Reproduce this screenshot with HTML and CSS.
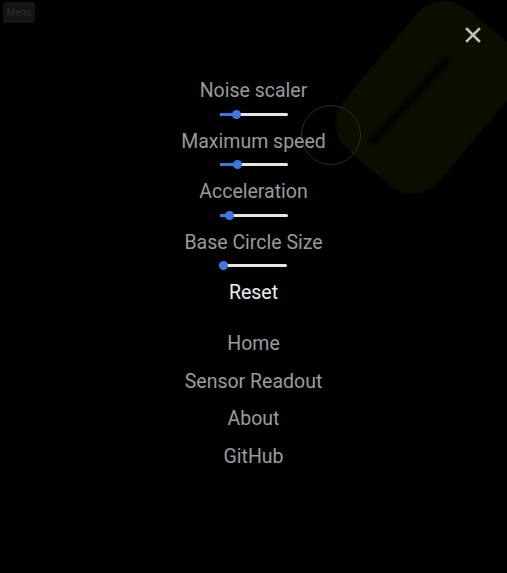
FILE: index.html
```html
<!DOCTYPE html>
<html>
<head>
<meta charset="utf-8">
<link rel="stylesheet" href="styles.css">
</head>
<body>
<svg class="bg" width="507" height="573" viewBox="0 0 507 573">
  <defs>
    <filter id="blur"><feGaussianBlur stdDeviation="2.5"/></filter>
  </defs>
  <rect x="0" y="0" width="125" height="185" rx="34" fill="#0b0706" transform="translate(440,-14) rotate(40)" filter="url(#blur)"/>
  <line x1="447" y1="60" x2="372" y2="142" stroke="#020101" stroke-width="7" stroke-linecap="round" filter="url(#blur)"/>
</svg>
<div class="circle"></div>
<button class="menu-btn">Menu</button>
<button class="close-btn" aria-label="Close">
  <svg width="16" height="16" viewBox="0 0 16 16"><path d="M2 2 L14 14 M14 2 L2 14" stroke="#bdbdbd" stroke-width="2.6" stroke-linecap="square"/></svg>
</button>
<main class="panel">
  <div class="group">
    <div class="label">Noise scaler</div>
    <div class="slider"><div class="track"><div class="fill" style="width:17px"></div><div class="thumb" style="left:17px"></div></div></div>
  </div>
  <div class="group">
    <div class="label">Maximum speed</div>
    <div class="slider"><div class="track"><div class="fill" style="width:18px"></div><div class="thumb" style="left:18px"></div></div></div>
  </div>
  <div class="group">
    <div class="label">Acceleration</div>
    <div class="slider"><div class="track"><div class="fill" style="width:10px"></div><div class="thumb" style="left:10px"></div></div></div>
  </div>
  <div class="group">
    <div class="label">Base Circle Size</div>
    <div class="slider"><div class="track"><div class="fill" style="width:4px"></div><div class="thumb" style="left:4px"></div></div></div>
  </div>
  <div class="reset">Reset</div>
  <nav class="nav">
    <a>Home</a>
    <a>Sensor Readout</a>
    <a>About</a>
    <a>GitHub</a>
  </nav>
</main>
</body>
</html>
```
FILE: styles.css
```css
html, body {
  margin: 0;
  padding: 0;
  background: #000;
  width: 507px;
  height: 573px;
  overflow: hidden;
  font-family: Roboto, "Liberation Sans", sans-serif;
}
body { position: relative; }
.bg {
  position: absolute;
  left: 0;
  top: 0;
}
.circle {
  position: absolute;
  left: 301px;
  top: 105px;
  width: 58px;
  height: 58px;
  border: 1px solid #2c2c2c;
  border-radius: 50%;
}
.menu-btn {
  position: absolute;
  left: 3px;
  top: 2px;
  width: 32px;
  height: 21px;
  padding: 0;
  border: none;
  border-radius: 2px;
  background: #141414;
  color: #2c2c2c;
  font-family: Roboto, "Liberation Sans", sans-serif;
  font-size: 10px;
}
.close-btn {
  position: absolute;
  left: 465px;
  top: 27px;
  width: 16px;
  height: 16px;
  padding: 0;
  border: none;
  background: transparent;
  display: flex;
}
.panel {
  position: relative;
  display: flex;
  flex-direction: column;
  align-items: center;
  padding-top: 79px;
}
.group {
  display: flex;
  flex-direction: column;
  align-items: center;
  height: 50.5px;
}
.label {
  font-size: 19.5px;
  line-height: 24px;
  height: 24px;
  color: #9a9a9a;
  white-space: nowrap;
}
.slider {
  height: 26.5px;
  padding-top: 9.5px;
  box-sizing: border-box;
}
.track {
  position: relative;
  width: 68px;
  height: 3px;
  background: #e6e6e6;
  border-radius: 2px;
}
.fill {
  position: absolute;
  left: 0;
  top: 0;
  height: 3px;
  background: #3b79e2;
  border-radius: 2px;
}
.thumb {
  position: absolute;
  top: -3px;
  width: 9px;
  height: 9px;
  margin-left: -4.5px;
  border-radius: 50%;
  background: #3b79e2;
}
.reset {
  font-size: 19.5px;
  line-height: 24px;
  color: #ededed;
  margin-bottom: 20.25px;
}
.nav {
  display: flex;
  flex-direction: column;
  align-items: center;
}
.nav a {
  font-size: 19.5px;
  line-height: 37.5px;
  color: #9c9c9c;
  white-space: nowrap;
}
```
